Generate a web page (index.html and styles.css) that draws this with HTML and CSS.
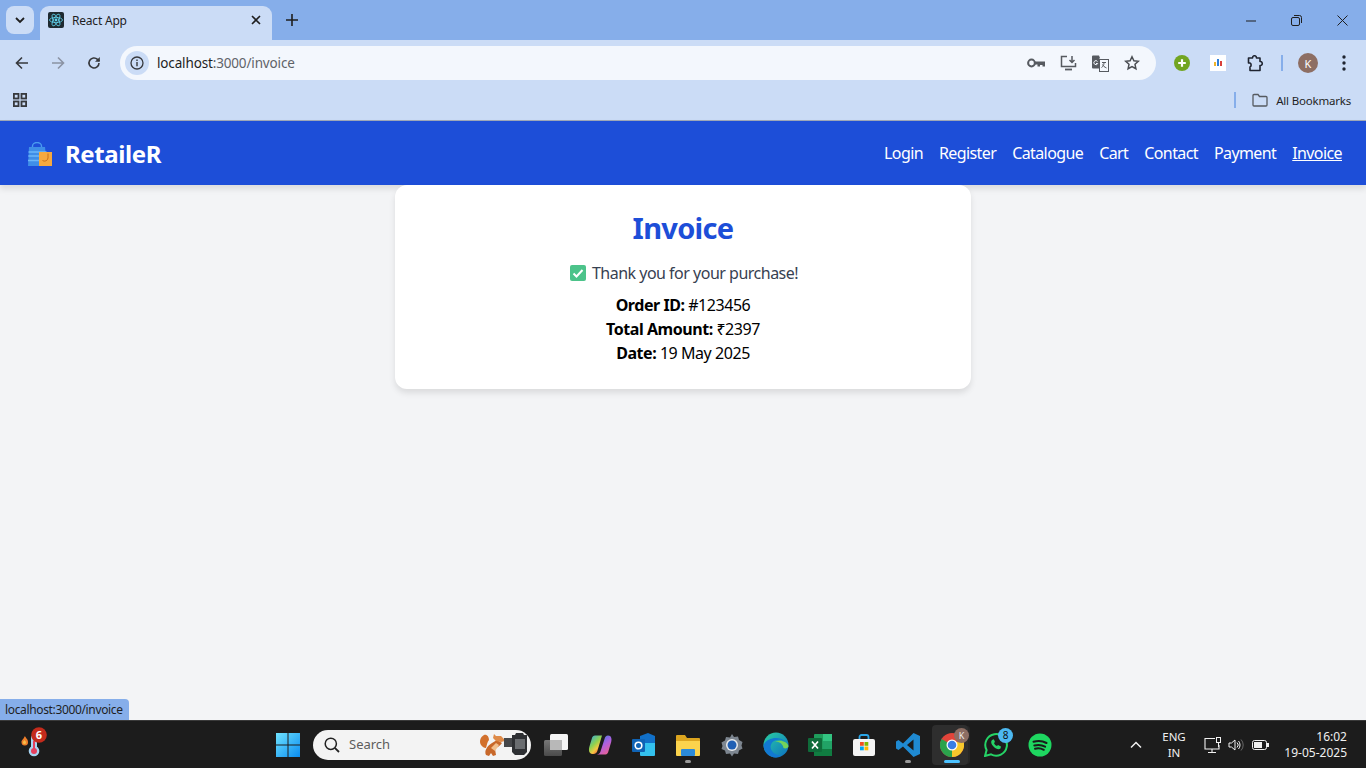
FILE: index.html
```html
<!DOCTYPE html>
<html lang="en">
<head>
    <meta charset="UTF-8">
    <meta name="viewport" content="width=device-width, initial-scale=1.0">
    <title>React App</title>
    <link rel="stylesheet" href="styles.css">
</head>
<body>
    <div class="screen">
        <!-- browser chrome -->
        <header class="chrome">
            <div class="tabstrip">
                <div class="tab-search">
                    <svg width="12" height="12" viewBox="0 0 12 12"><path d="M2 4l4 4 4-4" fill="none" stroke="#1f1f1f" stroke-width="1.8"/></svg>
                </div>
                <div class="tab">
                    <svg class="favicon" width="16" height="16" viewBox="0 0 16 16">
                        <rect width="16" height="16" rx="2" fill="#1f2a30"/>
                        <g fill="none" stroke="#5fd3ee" stroke-width=".8">
                            <ellipse cx="8" cy="8" rx="6.500" ry="2.600"/>
                            <ellipse cx="8" cy="8" rx="6.500" ry="2.600" transform="rotate(60 8 8)"/>
                            <ellipse cx="8" cy="8" rx="6.500" ry="2.600" transform="rotate(120 8 8)"/>
                        </g>
                        <circle cx="8" cy="8" r="1.400" fill="#5fd3ee"/>
                    </svg>
                    <span class="tab-title">React App</span>
                    <svg class="tab-close" width="10" height="10" viewBox="0 0 10 10"><path d="M1 1l8 8M9 1l-8 8" stroke="#1f1f1f" stroke-width="1.600"/></svg>
                </div>
                <svg class="new-tab" width="12" height="12" viewBox="0 0 12 12"><path d="M6 0v12M0 6h12" stroke="#1f1f1f" stroke-width="1.600"/></svg>
                <div class="window-controls">
                    <svg width="10" height="10" viewBox="0 0 10 10"><path d="M0 5h10" stroke="#1f1f1f"/></svg>
                    <svg width="11" height="11" viewBox="0 0 11 11"><rect x=".5" y="2.500" width="8" height="8" rx="1.500" fill="none" stroke="#1f1f1f"/><path d="M3 .5h5.500a2 2 0 0 1 2 2V8" fill="none" stroke="#1f1f1f"/></svg>
                    <svg width="11" height="11" viewBox="0 0 11 11"><path d="M.5.5l10 10M10.500.5l-10 10" stroke="#1f1f1f"/></svg>
                </div>
            </div>

            <div class="toolbar">
                <div class="nav-buttons">
                    <svg width="14" height="14" viewBox="0 0 14 14"><path d="M13 7H2M7 1.500L1.500 7 7 12.500" fill="none" stroke="#37393d" stroke-width="1.600"/></svg>
                    <svg width="14" height="14" viewBox="0 0 14 14"><path d="M1 7h11M7 1.500L12.500 7 7 12.500" fill="none" stroke="#8b93a3" stroke-width="1.600"/></svg>
                    <svg width="14" height="14" viewBox="0 0 14 14"><path d="M12 7a5 5 0 1 1-1.500-3.600L12.300 5" fill="none" stroke="#37393d" stroke-width="1.600"/><path d="M12.800 1v4.800H8z" fill="#37393d"/></svg>
                </div>
                <div class="omnibox">
                    <span class="site-info">
                        <svg width="14" height="14" viewBox="0 0 14 14"><circle cx="7" cy="7" r="6" fill="none" stroke="#37393d" stroke-width="1.300"/><path d="M7 6v4.200M7 3.600v1.300" stroke="#37393d" stroke-width="1.400"/></svg>
                    </span>
                    <span class="url">localhost<span class="url-path">:3000/invoice</span></span>
                    <div class="omni-actions">
                        <svg width="18" height="10" viewBox="0 0 18 10"><circle cx="4.500" cy="5" r="3.400" fill="none" stroke="#565a60" stroke-width="2"/><path d="M8 3.500h10V8.500h-2.500V7H13v1.500h-2.500V6.500H8z" fill="#565a60"/></svg>
                        <svg width="17" height="16" viewBox="0 0 17 16"><path d="M7 1.500H1.500v10h14V8" fill="none" stroke="#565a60" stroke-width="1.500"/><path d="M5 14.500h7" stroke="#565a60" stroke-width="1.800"/><path d="M12 1v6M9.500 5L12 7.500 14.500 5" fill="none" stroke="#565a60" stroke-width="1.500"/></svg>
                        <svg width="17" height="17" viewBox="0 0 17 17"><path d="M0 1.500a1 1 0 0 1 1-1h6l1.200 3H7l1 10H1a1 1 0 0 1-1-1z" fill="#565a60"/><rect x="7.500" y="4.500" width="9" height="12" fill="#f3f7fd" stroke="#565a60"/><path d="M10 7.500h4M12 7.500c0 3-1 4-2.500 5M10.500 9.500c.5 1.500 2 2.500 4 3.500" fill="none" stroke="#565a60"/><path d="M5.500 6.500a2 2 0 1 0 .2 2H4" fill="none" stroke="#f3f7fd"/></svg>
                        <svg width="16" height="16" viewBox="0 0 16 16"><path d="M8 1.800l1.900 4 4.400.5-3.300 3 .9 4.400L8 11.500l-3.900 2.200.9-4.400-3.300-3 4.400-.5z" fill="none" stroke="#4a4d52" stroke-width="1.500"/></svg>
                    </div>
                </div>
                <div class="extensions">
                    <svg class="ext" width="16" height="16" viewBox="0 0 16 16"><circle cx="8" cy="8" r="8" fill="#72a521"/><path d="M8 4.200v7.600M4.200 8h7.600" stroke="#fff" stroke-width="2.200"/></svg>
                    <svg class="ext ext-wide" width="16" height="16" viewBox="0 0 16 16"><rect width="16" height="16" fill="#fff"/><rect x="4" y="7" width="2" height="4" fill="#f0b429"/><rect x="7" y="4" width="2" height="7" fill="#2f7fd8"/><rect x="10" y="6" width="2" height="5" fill="#d9403a"/></svg>
                    <svg class="ext" width="17" height="17" viewBox="0 0 17 17"><path d="M1.500 3h4c0-3 4-3 4 0h3.500v3.500c3-.5 3 4.500 0 4V15.500H3V12c1.500-.5 1.500-3.500 0-4H1.500z" fill="none" stroke="#1f2430" stroke-width="1.600" stroke-linejoin="round"/></svg>
                    <span class="toolbar-sep"></span>
                    <span class="avatar">K</span>
                    <svg class="menu" width="4" height="16" viewBox="0 0 4 16"><circle cx="2" cy="2" r="1.700" fill="#1f2430"/><circle cx="2" cy="8" r="1.700" fill="#1f2430"/><circle cx="2" cy="14" r="1.700" fill="#1f2430"/></svg>
                </div>
            </div>

            <div class="bookmarks">
                <svg width="14" height="14" viewBox="0 0 14 14"><g fill="none" stroke="#37393d" stroke-width="1.800"><rect x=".9" y=".9" width="4.600" height="4.600"/><rect x="8.500" y=".9" width="4.600" height="4.600"/><rect x=".9" y="8.500" width="4.600" height="4.600"/><rect x="8.500" y="8.500" width="4.600" height="4.600"/></g></svg>
                <span class="bookmarks-sep"></span>
                <svg width="16" height="14" viewBox="0 0 16 14"><path d="M1 2.500a1 1 0 0 1 1-1h4l1.500 2H14a1 1 0 0 1 1 1v7.500a1 1 0 0 1-1 1H2a1 1 0 0 1-1-1z" fill="none" stroke="#565a60" stroke-width="1.300"/></svg>
                <span class="bookmarks-label">All Bookmarks</span>
            </div>
        </header>

        <!-- app -->
        <nav class="navbar">
            <a class="brand" href="#">
                <svg class="brand-logo" width="25" height="25" viewBox="0 0 25 25">
                    <path d="M5.500 6V4a4.500 3.500 0 0 1 9 0v2" fill="none" stroke="#4a9bf0" stroke-width="1.400"/>
                    <path d="M2 5h16l2 19H1z" fill="#3f8ee8"/>
                    <path d="M1.500 10h18M1.300 14h18.500M1 18.500h19" stroke="#6cb6f7" stroke-width="1.400"/>
                    <rect x="12" y="10" width="13" height="14" fill="#f5a93f"/>
                    <path d="M21 11.500v4.500a3.500 3.500 0 0 1-5.500 2.500" fill="none" stroke="#c9701a" stroke-width="1"/>
                </svg>
                <span>RetaileR</span>
            </a>
            <ul class="nav-links">
                <li><a href="#">Login</a></li>
                <li><a href="#">Register</a></li>
                <li><a href="#">Catalogue</a></li>
                <li><a href="#">Cart</a></li>
                <li><a href="#">Contact</a></li>
                <li><a href="#">Payment</a></li>
                <li><a class="active" href="#">Invoice</a></li>
            </ul>
        </nav>

        <main class="content">
            <section class="card">
                <h1>Invoice</h1>
                <p class="thanks">
                    <svg width="16" height="16" viewBox="0 0 16 16"><rect width="16" height="16" rx="2" fill="#4cc38a"/><path d="M3.500 8.500l3 3 6-6.500" fill="none" stroke="#fff" stroke-width="2"/></svg>
                    Thank you for your purchase!
                </p>
                <p class="detail"><strong>Order ID:</strong> #123456</p>
                <p class="detail"><strong>Total Amount:</strong> ₹2397</p>
                <p class="detail"><strong>Date:</strong> 19 May 2025</p>
            </section>
        </main>

        <div class="status-bubble">localhost:3000/invoice</div>

        <!-- windows taskbar -->
        <footer class="taskbar">
            <div class="task-left">
                <svg width="29" height="31" viewBox="0 0 29 31">
                    <path d="M6 9c.5 2 3 3 3 6a3.200 3.200 0 0 1-6.500 .5c-.3-2 1-2.500 1.500-3.500 .5 0 1-1.500 2-3z" fill="#ef7f2a"/>
                    <path d="M5.500 13c.7 1 1.500 1.500 1.500 2.500a1.500 1.500 0 0 1-3 0c0-1 1-1.500 1.500-2.500z" fill="#f7c04a"/>
                    <rect x="12" y="8" width="6" height="16" rx="3" fill="#a8d4f2"/>
                    <circle cx="15" cy="24" r="5.300" fill="#a8d4f2"/>
                    <circle cx="15" cy="24" r="3" fill="#e5405e"/>
                    <rect x="14" y="14" width="2" height="9" fill="#e5405e"/>
                    <circle cx="20" cy="8" r="7.800" fill="#c42b1c"/>
                </svg>
                <span class="temp-badge">6</span>
            </div>
            <div class="task-center">
                <div class="task-item">
                    <svg width="24" height="24" viewBox="0 0 24 24">
                        <defs><linearGradient id="win" x1="0" y1="0" x2="1" y2="1"><stop offset="0" stop-color="#6fe3ff"/><stop offset="1" stop-color="#0a8cf0"/></linearGradient></defs>
                        <path d="M0 0h11.500v11.500H0zM12.500 0H24v11.500H12.500zM0 12.500h11.500V24H0zM12.500 12.500H24V24H12.500z" fill="url(#win)"/>
                    </svg>
                </div>
                <div class="search-pill">
                    <svg width="16" height="16" viewBox="0 0 16 16"><circle cx="6.800" cy="6.800" r="5.600" fill="none" stroke="#222" stroke-width="1.500"/><path d="M10.800 10.800L15 15" stroke="#222" stroke-width="1.800"/></svg>
                    <span class="search-label">Search</span>
                    <svg class="search-art" width="50" height="26" viewBox="0 0 50 26">
                        <path d="M5 3C1 5 0 10 2 13c1.500 2 3 3 5 3 1-3 1-6 3-8 0-3-2-6-5-5z" fill="#d2702c"/>
                        <path d="M7 23c-2-4 1-9 6-12l5-3 5 3c-2 3-5 4-7 6l1 6-3 1-2-3-2 3z" fill="#c8682a"/>
                        <path d="M15 2l2 2 5 0 3 3 1 2-4 1-5-1-3-3z" fill="#de8a48"/>
                        <path d="M12 16l5-5 3 2-4 6z" fill="#f2c08e"/>
                        <path d="M25 6h10v9H25z" fill="#45474a"/>
                        <path d="M33 3h3l1-2h7l1 2h3v17l-3 3h-9l-3-3z" fill="#2e3033"/>
                        <rect x="36" y="7" width="10" height="10" fill="#6a6d70"/>
                    </svg>
                </div>
                <div class="task-item">
                    <svg width="24" height="24" viewBox="0 0 24 24">
                        <defs><linearGradient id="taskfront" x1="0" y1="0" x2="0" y2="1"><stop offset="0" stop-color="#777"/><stop offset="1" stop-color="#4a4a4a"/></linearGradient></defs>
                        <rect x="6" y="1" width="18" height="16" rx="1.500" fill="#f4f4f4"/>
                        <rect x="0" y="7" width="18" height="16" rx="1.500" fill="url(#taskfront)"/>
                        <rect x="6" y="7" width="12" height="10" fill="#b8b8b8"/>
                    </svg>
                </div>
                <div class="task-item">
                    <svg width="24" height="24" viewBox="0 0 24 24">
                        <defs><linearGradient id="cop" x1="0" y1="0" x2=".7" y2="1"><stop offset="0" stop-color="#2fa8e6"/><stop offset=".5" stop-color="#8fd24e"/><stop offset=".75" stop-color="#f5c842"/><stop offset="1" stop-color="#f0503c"/></linearGradient><linearGradient id="cop2" x1=".2" y1="0" x2=".8" y2="1"><stop offset="0" stop-color="#3a7ce0"/><stop offset=".5" stop-color="#b060e0"/><stop offset="1" stop-color="#f0608c"/></linearGradient></defs>
                        <path d="M7 2.500h7l-4.500 15c-.6 2-1.800 3.500-4 3.500H4.500C1 21 .5 17 1.300 14L4 5c.4-1.500 1.500-2.500 3-2.500z" fill="url(#cop)"/>
                        <path d="M17.500 21.500h-9c2 0 3.400-1 4-3L16.500 6c.5-2 1.600-3.500 3.500-3.500 3.500 0 4 3.500 3.200 6.500L20.500 18c-.5 2-1.500 3.500-3 3.500z" fill="url(#cop2)"/>
                    </svg>
                </div>
                <div class="task-item">
                    <svg width="24" height="24" viewBox="0 0 24 24"><path d="M8 3l8-3 7 3v10H8z" fill="#1170c8"/><path d="M8 10h15v12a1 1 0 0 1-1 1H9a1 1 0 0 1-1-1z" fill="#33c1ee"/><rect x="0" y="6" width="13" height="13" rx="1" fill="#0f63b5"/><circle cx="6.500" cy="12.500" r="3.300" fill="none" stroke="#fff" stroke-width="1.600"/></svg>
                </div>
                <div class="task-item running">
                    <svg width="24" height="24" viewBox="0 0 24 24"><path d="M0 3a1 1 0 0 1 1-1h8l2 3h12a1 1 0 0 1 1 1v3H0z" fill="#dca51f"/><path d="M0 8h24v14a1 1 0 0 1-1 1H1a1 1 0 0 1-1-1z" fill="#fbd34d"/><rect x="5" y="16" width="14" height="7" rx="1" fill="#2b8ad8"/></svg>
                </div>
                <div class="task-item">
                    <svg width="24" height="24" viewBox="0 0 24 24"><path d="M12 1l2 3 4-.5 1 3.500 3.500 2-1 3.500 1 3-3.500 2-1 3.500-4-.5-2 3-2-3-4 .5-1-3.500L1.500 16l1-3-1-3.500L5 7.500l1-3.500 4 .5z" fill="#7d8690"/><circle cx="12" cy="12" r="6" fill="#e8eaec"/><circle cx="12" cy="12" r="4.500" fill="#1f5fb4"/></svg>
                </div>
                <div class="task-item">
                    <svg width="26" height="26" viewBox="0 0 26 26">
                        <defs><linearGradient id="edge" x1="0" y1="0" x2="1" y2="1"><stop offset="0" stop-color="#2ad0a0"/><stop offset="1" stop-color="#0c6fc4"/></linearGradient></defs>
                        <circle cx="13" cy="13" r="12.500" fill="url(#edge)"/>
                        <path d="M25 15c-1-6-6-8-11-7-6 1-8 7-5 11 2 3 6 5 10 4a12 12 0 0 1-6 2.500C6 25.500 .5 20 .5 13 3 8 8 6 13 6c7 0 11 4 12 9z" fill="#1279d2"/>
                        <path d="M25.500 14c0 2-3 3-5 2-1-5-5-7-9-6 6-3 13 0 14 4z" fill="#73d35a"/>
                    </svg>
                </div>
                <div class="task-item">
                    <svg width="24" height="24" viewBox="0 0 24 24"><rect x="6" y="1" width="18" height="22" rx="1" fill="#1f9c5c"/><rect x="15" y="1" width="9" height="7" fill="#33c481"/><rect x="15" y="8" width="9" height="8" fill="#21a366"/><rect x="6" y="16" width="18" height="7" fill="#107c41"/><rect x="0" y="5" width="14" height="14" rx="1" fill="#0f6b3a"/><path d="M4 8.500l6 7M10 8.500l-6 7" stroke="#fff" stroke-width="1.700"/></svg>
                </div>
                <div class="task-item">
                    <svg width="24" height="24" viewBox="0 0 24 24"><path d="M7.500 6V4a2 2 0 0 1 2-2h5a2 2 0 0 1 2 2v2" fill="none" stroke="#2aa6e8" stroke-width="1.800"/><rect x="1" y="6" width="22" height="17" rx="2" fill="#f4f4f4"/><rect x="8" y="9" width="3.800" height="3.800" fill="#f25022"/><rect x="12.500" y="9" width="3.800" height="3.800" fill="#7fba00"/><rect x="8" y="13.500" width="3.800" height="3.800" fill="#00a4ef"/><rect x="12.500" y="13.500" width="3.800" height="3.800" fill="#ffb900"/></svg>
                </div>
                <div class="task-item running">
                    <svg width="24" height="24" viewBox="0 0 24 24"><path d="M17.500 0L24 3v18l-6.500 3L7 13.500l-4.500 3.500L0 15.500v-7L2.500 7 7 10.500zM17.500 6.500L11 12l6.500 5.500z" fill="#1f8ad2"/></svg>
                </div>
                <div class="task-item active">
                    <svg class="task-icon" width="24" height="24" viewBox="0 0 24 24"><circle cx="12" cy="12" r="12" fill="#e2443a"/><path d="M12 12L22.400 6A12 12 0 0 1 12 24z" fill="#f8c82c"/><path d="M12 12V24A12 12 0 0 1 1.600 6z" fill="#2ba24c"/><circle cx="12" cy="12" r="5.500" fill="#fff"/><circle cx="12" cy="12" r="4.300" fill="#3a7ee6"/></svg>
                    <span class="chrome-badge">K</span>
                </div>
                <div class="task-item">
                    <svg width="24" height="24" viewBox="0 0 24 24"><path d="M1 23l1.600-6A10.800 10.800 0 1 1 7 21.400z" fill="none" stroke="#25d366" stroke-width="2"/><path d="M8 7c-1.500 1.500-1 4 1.500 6.500s5 3.500 7 2l.5-2-3-1.500-1 1c-1.500-.5-2.500-1.500-3-3l1-1-1.200-2.800z" fill="#25d366"/></svg>
                    <span class="wa-badge">8</span>
                </div>
                <div class="task-item">
                    <svg width="24" height="24" viewBox="0 0 24 24"><circle cx="12" cy="12" r="11.500" fill="#1ed760"/><path d="M5.500 8.800c4-1.200 9-1 13 1.200M6.300 12.500c3.500-1 7.500-.7 10.800 1.200M7 15.800c3-.8 6-.5 8.800 1" fill="none" stroke="#1a1a1a" stroke-width="2" stroke-linecap="round"/></svg>
                </div>
            </div>
            <div class="tray">
                <svg class="tray-chevron" width="12" height="8" viewBox="0 0 12 8"><path d="M1 6.500l5-5 5 5" fill="none" stroke="#f0f0f0" stroke-width="1.500"/></svg>
                <div class="lang"><span>ENG</span><span>IN</span></div>
                <svg class="tray-net" width="18" height="18" viewBox="0 0 18 18"><path d="M11 2.500H1v10.500h14V9M8 13v3M4 16.500h8" fill="none" stroke="#f0f0f0" stroke-width="1.100"/><rect x="12.500" y="1.500" width="4" height="5" fill="none" stroke="#f0f0f0"/><path d="M14.500 6.500V11" stroke="#f0f0f0"/></svg>
                <svg class="tray-vol" width="16" height="14" viewBox="0 0 16 14"><path d="M1 5v4h2.500L7 12V2L3.500 5z" fill="none" stroke="#f0f0f0"/><path d="M9 4.500a3.500 3.500 0 0 1 0 5M10.500 3a6 6 0 0 1 0 8" fill="none" stroke="#f0f0f0"/><path d="M13 1.500a8 8 0 0 1 0 11" fill="none" stroke="#666"/></svg>
                <svg class="tray-batt" width="17" height="10" viewBox="0 0 17 10"><rect x=".5" y=".5" width="14" height="9" rx="2" fill="none" stroke="#f0f0f0"/><rect x="2" y="2" width="8" height="6" fill="#f0f0f0"/><rect x="15" y="3" width="2" height="4" fill="#f0f0f0"/></svg>
                <div class="clock"><span>16:02</span><span>19-05-2025</span></div>
            </div>
        </footer>
    </div>
</body>
</html>
```

FILE: styles.css
```css
* {
    box-sizing: border-box;
}

body {
    margin: 0;
    font-family: "Noto Sans", "Open Sans", sans-serif;
    background-color: #f3f4f6;
}

.screen {
    position: relative;
    display: flex;
    flex-direction: column;
    width: 1366px;
    height: 768px;
    overflow: hidden;
}

/* Chrome window */
.chrome {
    flex-shrink: 0;
    background-color: #cbdcf6;
    color: #1f1f1f;
}

.tabstrip {
    display: flex;
    align-items: flex-end;
    height: 40px;
    padding-left: 6px;
    background-color: #86aeea;
}

.tab-search {
    display: flex;
    align-items: center;
    justify-content: center;
    width: 28px;
    height: 28px;
    margin-bottom: 6px;
    border-radius: 8px;
    background-color: #cbdcf6;
}

.tab {
    display: flex;
    align-items: center;
    width: 232px;
    height: 34px;
    margin-left: 6px;
    padding: 0 11px 6px 8px;
    border-radius: 9px 9px 0 0;
    background-color: #cbdcf6;
}

.tab-title {
    flex: 1;
    margin-left: 8px;
    font-size: 12px;
    letter-spacing: -0.2px;
}

.new-tab {
    margin: 0 0 14px 14px;
}

.window-controls {
    display: flex;
    gap: 35px;
    margin-left: auto;
    margin-bottom: 14px;
    padding-right: 18px;
    align-items: center;
}

.toolbar {
    display: flex;
    align-items: center;
    height: 40px;
    padding: 6px 0 0 15px;
    border-radius: 10px 10px 0 0;
}

.nav-buttons {
    display: flex;
    gap: 22px;
    width: 105px;
}

.omnibox {
    display: flex;
    align-items: center;
    width: 1036px;
    height: 34px;
    padding: 0 16px 0 5px;
    border-radius: 17px;
    background-color: #f3f7fd;
}

.site-info {
    display: flex;
    align-items: center;
    justify-content: center;
    width: 24px;
    height: 24px;
    border-radius: 50%;
    background-color: #cbdcf6;
}

.url {
    margin-left: 8px;
    font-size: 13.5px;
    letter-spacing: -0.15px;
}

.url-path {
    color: #5f6368;
}

.omni-actions {
    display: flex;
    align-items: center;
    gap: 15px;
    margin-left: auto;
}

.extensions {
    display: flex;
    align-items: center;
    flex: 1;
    padding-left: 18px;
}

.ext {
    margin-right: 20px;
}

.ext-wide {
    margin-right: 21px;
}

.toolbar-sep {
    width: 2px;
    height: 16px;
    margin: 0 15px 0 -3px;
    background-color: #86aeea;
}

.avatar {
    display: flex;
    align-items: center;
    justify-content: center;
    width: 20px;
    height: 20px;
    border-radius: 50%;
    background-color: #8d6e63;
    color: #fff;
    font-size: 11px;
}

.menu {
    margin-left: 24px;
}

.bookmarks {
    display: flex;
    align-items: center;
    height: 41px;
    padding: 0 15px 0 13px;
    border-bottom: 1px solid #9fa8b8;
}

.bookmarks-sep {
    width: 2px;
    height: 16px;
    margin-left: auto;
    margin-right: 16px;
    background-color: #86aeea;
}

.bookmarks-label {
    margin-left: 8px;
    font-size: 11.5px;
    letter-spacing: -0.2px;
}

/* App navbar */
.navbar {
    position: relative;
    display: flex;
    align-items: center;
    justify-content: space-between;
    flex-shrink: 0;
    height: 64px;
    padding: 0 24px 0 27px;
    background-color: #1d4ed8;
    box-shadow: 0 4px 6px rgba(0, 0, 0, 0.1);
    z-index: 1;
}

.navbar a {
    color: white;
    text-decoration: none;
}

.brand {
    display: flex;
    align-items: center;
    gap: 13px;
    font-size: 24px;
    font-weight: 700;
    letter-spacing: -0.4px;
}

.brand-logo {
    margin-top: 3px;
}

.nav-links {
    display: flex;
    gap: 16px;
    margin: 0;
    padding: 0;
    list-style: none;
    font-size: 16px;
    letter-spacing: -0.6px;
}

.nav-links a.active {
    text-decoration: underline;
}

/* Invoice */
.content {
    flex: 1;
    display: flex;
    justify-content: center;
    align-items: flex-start;
    background-color: #f3f4f6;
}

.card {
    position: relative;
    z-index: 2;
    width: 576px;
    padding: 24px;
    border-radius: 12px;
    background-color: white;
    box-shadow: 0 4px 6px rgba(0, 0, 0, 0.1);
    text-align: center;
}

.card h1 {
    margin: 0 0 16px;
    color: #1d4ed8;
    font-size: 29px;
    line-height: 38px;
    height: 36px;
    font-weight: 700;
    letter-spacing: -0.7px;
}

.thanks {
    display: flex;
    align-items: center;
    justify-content: center;
    gap: 6px;
    margin: 0 0 8px;
    padding-left: 2px;
    color: #374151;
    font-size: 16px;
    line-height: 24px;
    letter-spacing: -0.5px;
}

.detail {
    margin: 0;
    color: black;
    font-size: 16px;
    line-height: 24px;
    letter-spacing: -0.45px;
}

/* Link hover bubble */
.status-bubble {
    position: absolute;
    left: 0;
    bottom: 48px;
    height: 21px;
    padding: 0 6px 0 5px;
    border-top-right-radius: 4px;
    background-color: #86aeea;
    color: #1f1f1f;
    font-size: 12px;
    line-height: 22px;
    letter-spacing: -0.35px;
    z-index: 3;
}

/* Windows taskbar */
.taskbar {
    display: flex;
    align-items: center;
    flex-shrink: 0;
    height: 48px;
    border-top: 1px solid #3a3a3a;
    background-color: #1c1c1c;
    color: #f0f0f0;
}

.task-left {
    position: relative;
    width: 266px;
    height: 47px;
    padding: 6px 0 0 19px;
}

.temp-badge {
    position: absolute;
    left: 32px;
    top: 6px;
    width: 14px;
    color: white;
    font-size: 11px;
    font-weight: 700;
    line-height: 16px;
    text-align: center;
}

.task-center {
    display: flex;
    align-items: center;
    height: 47px;
}

.task-item {
    position: relative;
    display: flex;
    align-items: center;
    justify-content: center;
    width: 44px;
    height: 40px;
}

.task-item.running::after,
.task-item.active::after {
    content: "";
    position: absolute;
    bottom: 2px;
    left: 50%;
    width: 6px;
    height: 3px;
    margin-left: -3px;
    border-radius: 2px;
    background-color: #9a9a9a;
}

/* stacked window look behind the open app */
.task-item.active::before {
    content: "";
    position: absolute;
    top: 0;
    bottom: 0;
    left: 2px;
    right: 6px;
    border-radius: 4px;
    background-color: #2e2e2e;
    box-shadow: 3px 0 0 -1px #262626;
}

.task-icon {
    position: relative;
}

.task-item.active::after {
    width: 16px;
    margin-left: -8px;
    background-color: #4cc2ff;
}

.chrome-badge {
    position: absolute;
    top: 3px;
    right: 5px;
    width: 15px;
    height: 15px;
    border-radius: 50%;
    background-color: #8d6e63;
    color: #f0f0f0;
    font-size: 9px;
    line-height: 15px;
    text-align: center;
}

.wa-badge {
    position: absolute;
    top: 3px;
    right: 5px;
    width: 15px;
    height: 15px;
    border-radius: 50%;
    background-color: #4cb8f0;
    color: #111;
    font-size: 10px;
    line-height: 15px;
    text-align: center;
}

.search-pill {
    display: flex;
    align-items: center;
    width: 218px;
    height: 30px;
    margin: 0 3px;
    padding: 0 2px 0 11px;
    border-radius: 15px;
    background-color: #f3f3f3;
}

.search-label {
    margin: 0 0 2px 9px;
    color: #5c5c5c;
    font-size: 13px;
}

.search-art {
    margin-left: auto;
}

.tray {
    display: flex;
    align-items: center;
    margin-left: auto;
    padding-right: 19px;
    font-size: 12px;
}

.tray-chevron {
    margin-right: 19px;
}

.lang {
    display: flex;
    flex-direction: column;
    align-items: center;
    width: 26px;
    margin-right: 17px;
    font-size: 11.5px;
    line-height: 16px;
}

.tray-net {
    margin-right: 6px;
}

.tray-vol {
    margin-right: 8px;
}

.clock {
    display: flex;
    flex-direction: column;
    align-items: flex-end;
    width: 78px;
    font-size: 12px;
    line-height: 16px;
}
```
